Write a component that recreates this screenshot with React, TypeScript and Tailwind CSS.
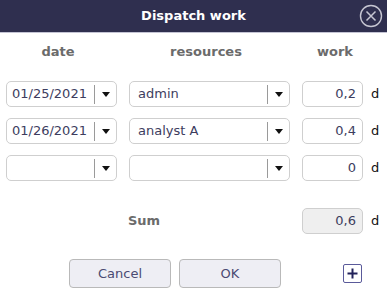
import React from "react";

const font = { fontFamily: '"DejaVu Sans", Verdana, sans-serif' };

const Arrow = () => (
  <div className="flex items-center h-full">
    <div className="w-px h-[19px] bg-[#9a9a9a]" />
    <div className="w-[21px] flex justify-center">
      <svg width="8" height="5" viewBox="0 0 8 5">
        <path d="M0 0 H8 L4 5 Z" fill="#111" />
      </svg>
    </div>
  </div>
);

const Select = ({ value, pad }: { value: string; pad: string }) => (
  <div className="h-[26px] border border-[#cfcfcf] rounded-[5px] bg-white flex items-center">
    <div className={`flex-1 ${pad} text-[13px] text-[#3d3d5e] truncate`}>{value}</div>
    <Arrow />
  </div>
);

const NumBox = ({ value, disabled }: { value: string; disabled?: boolean }) => (
  <div
    className={`h-[26px] border border-[#cfcfcf] rounded-[5px] flex items-center justify-end pr-[6px] text-[13px] text-[#3d3d5e] ${
      disabled ? "bg-[#efefef]" : "bg-white"
    }`}
  >
    {value}
  </div>
);

const rows = [
  { date: "01/25/2021", res: "admin", work: "0,2" },
  { date: "01/26/2021", res: "analyst A", work: "0,4" },
  { date: "", res: "", work: "0" },
];

export default function App() {
  return (
    <div className="w-[387px] h-[298px] bg-white overflow-hidden" style={font}>
      <div className="h-[33px] bg-[#2f2f4f] border-b border-[#c4c4d4] flex items-center justify-center relative">
        <span className="text-white font-bold text-[13px] -mt-[1px]">Dispatch work</span>
        <svg className="absolute right-[4px] top-[4px]" width="24" height="24" viewBox="0 0 24 24">
          <circle cx="12" cy="12" r="10.5" fill="none" stroke="#c6c6d2" strokeWidth="1.4" />
          <path d="M7.5 7.5 L16.5 16.5 M16.5 7.5 L7.5 16.5" stroke="#c6c6d2" strokeWidth="1.5" />
        </svg>
      </div>

      <div className="px-[6px]">
        <div className="grid grid-cols-[111px_161px_61px_auto] gap-x-[12px] items-center h-[38px] text-[13px] font-bold text-[#6b6b6b]">
          <div className="text-center pr-[7px]">date</div>
          <div className="text-center pr-[7px]">resources</div>
          <div className="text-center pl-[5px]">work</div>
          <div />
        </div>

        <div className="grid grid-cols-[111px_161px_61px_auto] gap-x-[12px] gap-y-[11px] mt-[10px] items-center">
          {rows.map((r, i) => (
            <React.Fragment key={i}>
              <Select value={r.date} pad="pl-[5px]" />
              <Select value={r.res} pad="pl-[8px]" />
              <NumBox value={r.work} />
              <div className="text-[13px] text-[#111] -ml-[4px]">d</div>
            </React.Fragment>
          ))}
        </div>

        <div className="grid grid-cols-[111px_161px_61px_auto] gap-x-[12px] items-center mt-[27px]">
          <div />
          <div className="text-[13px] font-bold text-[#6b6b6b] -ml-[1px]">Sum</div>
          <NumBox value="0,6" disabled />
          <div className="text-[13px] text-[#111] -ml-[4px]">d</div>
        </div>

        <div className="flex items-center mt-[25px]">
          <button className="ml-[63px] w-[102px] h-[29px] rounded-[4px] border border-[#b9b9b9] bg-[#eeeef4] text-[13px] text-[#4a4a72]">
            Cancel
          </button>
          <button className="ml-[8px] w-[102px] h-[29px] rounded-[4px] border border-[#b9b9b9] bg-[#eeeef4] text-[13px] text-[#4a4a72]">
            OK
          </button>
          <div className="ml-[62px] w-[19px] h-[19px] border border-[#5a5a9a] rounded-[2px] flex items-center justify-center">
            <svg width="11" height="11" viewBox="0 0 11 11">
              <path d="M5.5 0.5 V10.5 M0.5 5.5 H10.5" stroke="#22225a" strokeWidth="2" />
            </svg>
          </div>
        </div>
      </div>
    </div>
  );
}
